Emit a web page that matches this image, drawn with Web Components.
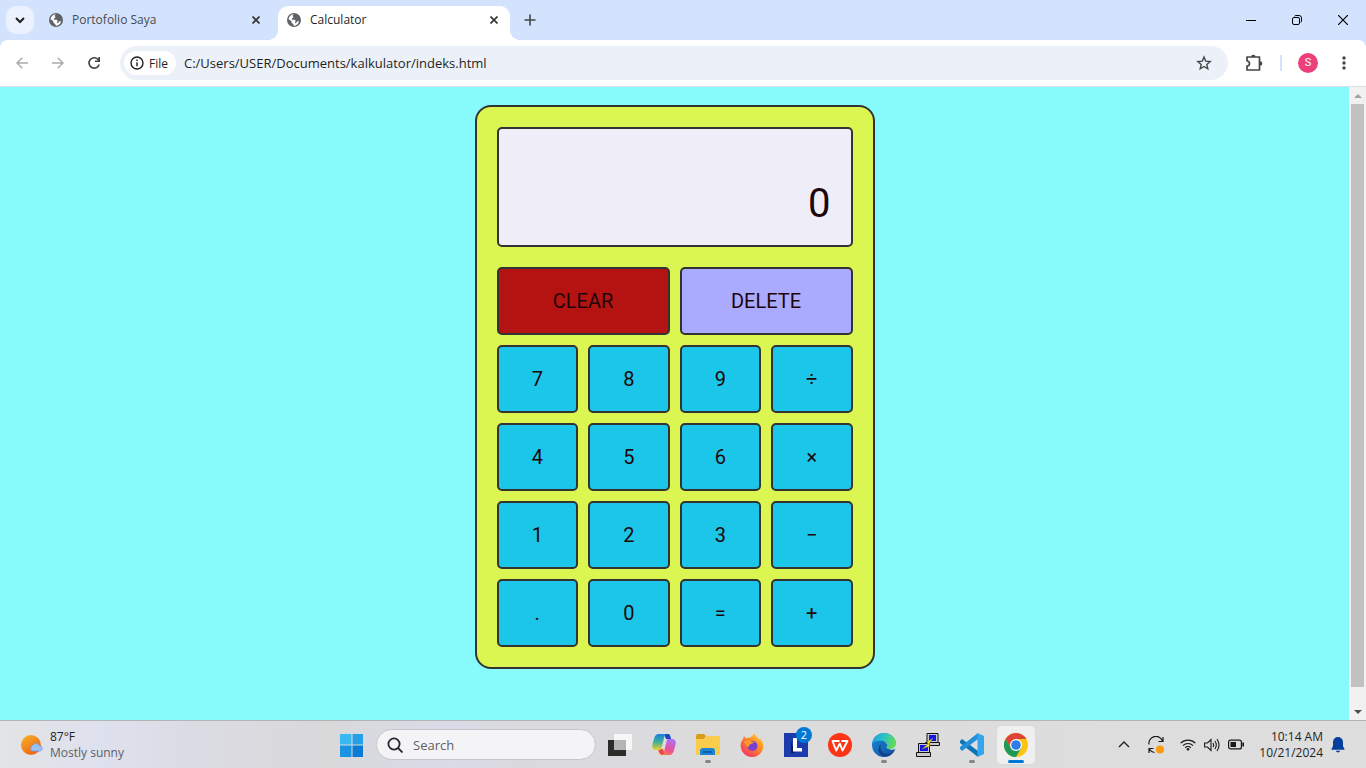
<!DOCTYPE html>
<html lang="en">
<head>
<meta charset="utf-8">
<title>Calculator</title>
<style>
  html, body { height: 100%; margin: 0; }
  body { font-family: "Open Sans", "Noto Sans", sans-serif; color: #1f1f1f; overflow: hidden; }
</style>
</head>
<body>
<desktop-shell>
  <tab-strip slot="top">
    <browser-tab>Portofolio Saya</browser-tab>
    <browser-tab active>Calculator</browser-tab>
  </tab-strip>
  <tool-bar slot="top"></tool-bar>
  <page-view slot="page"><calc-app></calc-app></page-view>
  <task-bar slot="bottom"></task-bar>
</desktop-shell>

<script>
const base = `
  :host, *, *::before, *::after { box-sizing: border-box; }
  button, input { font: inherit; color: inherit; border: 0; background: none; padding: 0; margin: 0; min-width: 0; outline: 0; }
  button { display: flex; align-items: center; justify-content: center; }
  svg { display: block; flex: none; }
`;
function define(name, css, html, setup) {
  const t = document.createElement('template');
  t.innerHTML = `<style>${base}${css}</style>${html}`;
  customElements.define(name, class extends HTMLElement {
    constructor() {
      super();
      this.attachShadow({ mode: 'open' }).append(t.content.cloneNode(true));
    }
    connectedCallback() { if (setup) setup(this, this.shadowRoot); }
  });
}

define('desktop-shell', `
  :host { display: flex; flex-direction: column; height: 100vh; }
  main { flex: 1; min-height: 0; display: flex; }
  ::slotted([slot=page]) { flex: 1; }
`, `<slot name="top"></slot><main><slot name="page"></slot></main><slot name="bottom"></slot>`);

define('tab-strip', `
  :host { display: flex; align-items: flex-end; height: 40px; background: #d3e2fd; padding-left: 6px; }
  .find { width: 28px; height: 28px; border-radius: 10px; background: #ebf2fe; margin: 0 4px 6px 0; }
  .add { width: 40px; height: 40px; }
  .win { margin-left: auto; display: flex; }
  .win button { width: 46px; height: 40px; }
`, `
  <button class="find" aria-label="Search tabs"><svg width="10" height="8" viewBox="0 0 10 8" fill="none" stroke="#1f1f1f" stroke-width="2"><path d="M1 2l4 4 4-4"/></svg></button>
  <slot></slot>
  <button class="add" aria-label="New tab"><svg width="12" height="12" viewBox="0 0 12 12" stroke="#444746" stroke-width="1.600"><path d="M6 .5v11M.5 6h11"/></svg></button>
  <div class="win">
    <button aria-label="Minimize"><svg width="10" height="10" viewBox="0 0 10 10" stroke="#000"><path d="M0 5.500h10"/></svg></button>
    <button aria-label="Restore"><svg width="10" height="10" viewBox="0 0 10 10" fill="none" stroke="#000"><rect x=".5" y="2.500" width="7" height="7" rx="1.500"/><path d="M2.500 1.200Q3 .5 4 .5h3a2.500 2.500 0 0 1 2.500 2.500v3q0 1-.8 1.500"/></svg></button>
    <button aria-label="Close"><svg width="10" height="10" viewBox="0 0 10 10" stroke="#000" stroke-width="1.200"><path d="M0 0l10 10M10 0L0 10"/></svg></button>
  </div>
`);

define('browser-tab', `
  :host { display: flex; align-items: center; width: 240px; height: 34px; padding: 0 14px 6px 10px; font-size: 12px; line-height: 16px; color: #474b50; position: relative; }
  :host([active]) { width: 232px; background: #fff; border-radius: 10px 10px 0 0; color: #1f1f1f; padding: 0 8px 6px 8px; }
  :host([active])::before, :host([active])::after { content: ""; position: absolute; bottom: 0; width: 10px; height: 10px; }
  :host([active])::before { right: 100%; background: radial-gradient(circle at 0 0, transparent 10px, #fff 10px); }
  :host([active])::after { left: 100%; background: radial-gradient(circle at 100% 0, transparent 10px, #fff 10px); }
  .t { flex: 1; padding-left: 8px; white-space: nowrap; }
  button { width: 16px; height: 16px; }
`, `
  <svg width="16" height="16" viewBox="0 0 16 16"><circle cx="8" cy="8" r="7" fill="#5f6368"/><path fill="#fff" d="M8.600 2.300c-1.300.1-1.900.6-1.900 1.500 0 .7.700.9.700 1.500 0 .9-1.600.6-1.600 1.600 0 .8.700.9 1.700.9 1.500 0 2 .5 2 1.400 0 .7-.5.9-.5 1.500 0 .5.500.7 1.100.3.700-.5.700-1.400 1.500-1.700.6-.2 1-.1 1.400.1a5.700 5.700 0 0 1-5.200 4.300c-.3-.5-.1-1.200-.6-1.800-.6-.6-1.800-.6-1.800-1.700 0-.7.200-1-.4-1.500L2.500 7.300a5.600 5.600 0 0 1 6.100-5z"/></svg>
  <span class="t"><slot></slot></span>
  <button aria-label="Close tab"><svg width="8" height="8" viewBox="0 0 8 8" stroke="#333" stroke-width="1.600"><path d="M.5.5l7 7M7.500.5l-7 7"/></svg></button>
`);

define('tool-bar', `
  :host { display: flex; align-items: center; height: 47px; background: linear-gradient(#d3e2fd, #d3e2fd); border-bottom: 1px solid #dcdfe3; }
  .row { flex: 1; display: flex; align-items: center; height: 46px; padding: 0 4px; background: #fff; border-radius: 8px 8px 0 0; }
  .nav { width: 36px; height: 36px; }
  .omni { flex: 1; display: flex; align-items: center; height: 34px; margin: 0 8px 0 8px; padding: 0 16px 0 4px; border-radius: 17px; background: #ecf1f9; }
  .chip { display: flex; align-items: center; gap: 4px; height: 24px; padding: 0 8px 0 5px; border-radius: 12px; background: #fff; font-size: 12px; font-weight: 500; }
  input { flex: 1; margin-left: 8px; font-size: 13px; height: 20px; }
  .sep { width: 2px; height: 16px; background: #d3e3fd; margin: 0 8px; }
  .me span { width: 20px; height: 20px; border-radius: 50%; background: #ec407a; color: #fff; font: 11px/20px Roboto, sans-serif; }
`, `
  <div class="row">
  <button class="nav" aria-label="Back"><svg width="12" height="12" viewBox="0 0 12 12" fill="none" stroke="#a9abad" stroke-width="1.500"><path d="M12 6H1M6.300.700L1 6l5.300 5.300"/></svg></button>
  <button class="nav" aria-label="Forward"><svg width="12" height="12" viewBox="0 0 12 12" fill="none" stroke="#a9abad" stroke-width="1.500"><path d="M0 6h11M5.700.700L11 6l-5.300 5.300"/></svg></button>
  <button class="nav" aria-label="Reload"><svg width="14" height="14" viewBox="0 0 14 14" fill="none" stroke="#3c4043" stroke-width="1.600"><path d="M12.200 8.500A5.200 5.200 0 1 1 11 3.300L12 4.600"/><path d="M12.200 1v4.200H8"/></svg></button>
  <div class="omni">
    <button class="chip"><svg width="16" height="16" viewBox="0 0 16 16" fill="none" stroke="#1f1f1f" stroke-width="1.400"><circle cx="8" cy="8" r="6"/><path d="M8 7.200v4M8 4.600V6"/></svg><span>File</span></button>
    <input aria-label="Address" value="C:/Users/USER/Documents/kalkulator/indeks.html">
    <button aria-label="Bookmark"><svg width="16" height="16" viewBox="0 0 16 16" fill="none" stroke="#444746" stroke-width="1.400"><path d="M8 2l1.700 4.100 4.500.4-3.400 2.900 1 4.400L8 11.500l-3.800 2.300 1-4.400L1.800 6.500l4.500-.4z"/></svg></button>
  </div>
  <button class="nav" aria-label="Extensions"><svg width="18" height="18" viewBox="0 0 18 18"><path fill="none" stroke="#444746" stroke-width="1.700" stroke-linejoin="round" d="M2 3h12.500v13H2v-3.800q2.500-.4 2.500-2.700T2 6.800z"/><path fill="#444746" d="M6 3a2.300 2.300 0 0 1 4.600 0zM15 7.200a2.300 2.300 0 0 1 0 4.600z"/></svg></button>
  <span class="sep"></span>
  <button class="nav me" aria-label="Profile"><span>S</span></button>
  <button class="nav" aria-label="Menu"><svg width="4" height="14" viewBox="0 0 4 14" fill="#444746"><circle cx="2" cy="2" r="1.700"/><circle cx="2" cy="7" r="1.700"/><circle cx="2" cy="12" r="1.700"/></svg></button>
  </div>
`);

define('page-view', `
  :host { display: flex; background: #87fafb; min-height: 0; }
  .content { flex: 1; padding-top: 18px; overflow: hidden; }
  .bar { width: 17px; display: flex; flex-direction: column; align-items: center; background: #f1f1f1; }
  .bar button { width: 17px; height: 17px; }
  .thumb { width: 13px; flex: 583; background: #c1c1c1; }
  .rest { flex: 16; }
`, `
  <div class="content"><slot></slot></div>
  <div class="bar">
    <button aria-label="Scroll up"><svg width="8" height="4" viewBox="0 0 8 4" fill="#a3a3a3"><path d="M4 0l4 4H0z"/></svg></button>
    <div class="thumb"></div><div class="rest"></div>
    <button aria-label="Scroll down"><svg width="8" height="4" viewBox="0 0 8 4" fill="#505050"><path d="M4 4l4-4H0z"/></svg></button>
  </div>
`);

define('calc-app', `
  :host { display: block; width: 400px; margin: 0 auto; padding: 20px; border: 2px solid #333; border-radius: 16px; background: #dcf651; font-family: Roboto, sans-serif; color: #1d0509; }
  output { display: flex; justify-content: flex-end; align-items: flex-end; height: 120px; padding: 0 20px 17px; border: 2px solid #333; border-radius: 5px; background: #efedf8; font-size: 40px; line-height: 48px; }
  .keys { display: grid; grid-template-columns: repeat(4, 1fr); gap: 10px; margin-top: 20px; }
  calc-key[wide] { grid-column: span 2; }
`, `
  <output>0</output>
  <div class="keys">
    <calc-key wide style="--fill:#b51212">CLEAR</calc-key>
    <calc-key wide style="--fill:#aaaaff">DELETE</calc-key>
    <calc-key>7</calc-key><calc-key>8</calc-key><calc-key>9</calc-key><calc-key>÷</calc-key>
    <calc-key>4</calc-key><calc-key>5</calc-key><calc-key>6</calc-key><calc-key>×</calc-key>
    <calc-key>1</calc-key><calc-key>2</calc-key><calc-key>3</calc-key><calc-key>−</calc-key>
    <calc-key>.</calc-key><calc-key>0</calc-key><calc-key>=</calc-key><calc-key>+</calc-key>
  </div>
`);

define('calc-key', `
  :host { display: block; }
  button { width: 100%; height: 68px; border: 2px solid #333; border-radius: 5px; background: var(--fill, #1cc6e8); font-size: 20px; line-height: 24px; }
`, `<button><slot></slot></button>`);

define('task-item', `
  :host { display: block; }
  button { position: relative; width: 44px; height: 47px; }
  .tile { display: flex; align-items: center; justify-content: center; width: 38px; height: 38px; border-radius: 4px; }
  :host([active]) .tile { background: #efeff0; box-shadow: 0 0 1px #bbb; }
  :host([running]) button::after, :host([active]) button::after { content: ""; position: absolute; bottom: 5px; left: 19px; width: 6px; height: 3px; border-radius: 2px; background: #85868a; }
  :host([active]) button::after { left: 14px; width: 16px; background: #0078d4; }
  .badge { position: absolute; top: 6px; right: 6px; width: 16px; height: 16px; border-radius: 50%; background: #0078d4; color: #fff; font-size: 11px; line-height: 16px; text-align: center; }
`, `<button><span class="tile"><slot></slot></span></button>`, (el, root) => {
  const button = root.querySelector('button');
  button.setAttribute('aria-label', el.getAttribute('name'));
  if (el.hasAttribute('count') && !root.querySelector('.badge')) {
    const badge = document.createElement('span');
    badge.className = 'badge';
    badge.textContent = el.getAttribute('count');
    button.append(badge);
  }
});

define('task-bar', `
  :host { display: grid; grid-template-columns: 1fr auto 1fr; height: 48px; border-top: 1px solid #b1b3b5; background: linear-gradient(90deg, #e3e4e5 0, #dee1ee 7%, #dbdbe4 14%, #d9d9da 24%, #d8dbe8 33%, #dadadd 38%, #dcdcdc 60%, #dedede 100%); padding-left: 2px; }
  .weather { justify-self: start; padding: 0 0 0 19px; gap: 7px; font-size: 12px; line-height: 16px; text-align: left; }
  .weather span, .clock span { display: block; }
  .muted { color: #5d5f66; }
  .mid { display: flex; align-items: center; }
  .search { display: flex; align-items: center; width: 220px; height: 31px; margin: 0 2px; padding: 0 10px; gap: 10px; border: 1px solid #c6c7cb; border-radius: 16px; background: #f4f4f7; color: #5f6065; font-size: 13px; }
  .search input { flex: 1; height: 20px; }
  .search input::placeholder { color: #5f6065; opacity: 1; }
  .tray { display: flex; align-items: center; justify-content: flex-end; padding-right: 20px; }
  .tray > button { height: 40px; width: 24px; }
  .tray .wide { width: 40px; }
  .tray .clock { display: block; width: auto; margin: 0 7px 0 11px; font-size: 12px; line-height: 16px; text-align: right; height: 32px; }
  .tray .bell { width: 16px; }
`, `
  <button class="weather">
    <svg width="22" height="22" viewBox="0 0 22 22"><defs><linearGradient id="sun" x1="0" y1="0" x2=".6" y2="1"><stop stop-color="#f5b52e"/><stop offset="1" stop-color="#f26511"/></linearGradient></defs><circle cx="10" cy="11" r="10" fill="url(#sun)"/><path d="M11 17a3 3 0 0 1 .3-5.200 4 4 0 0 1 7.200 0A2.700 2.700 0 0 1 19.500 17z" fill="#9cc0f8" stroke="#6f9ae8" stroke-width=".8"/></svg>
    <span><span>87°F</span><span class="muted">Mostly sunny</span></span>
  </button>
  <div class="mid">
    <task-item name="Start"><svg width="24" height="24" viewBox="0 0 24 24"><path fill="#3bb8f2" d="M0 1h11.500v10.500H0z"/><path fill="#23a0e8" d="M12.500 1H23v10.500H12.500z"/><path fill="#1a94e2" d="M0 12.500h11.500V24H0z"/><path fill="#0a7ad6" d="M12.500 12.500H23V24H12.500z"/></svg></task-item>
    <label class="search"><svg width="16" height="16" viewBox="0 0 16 16" fill="none" stroke="#26272b" stroke-width="1.800"><circle cx="7" cy="7" r="5.600"/><path d="M11 11l4.500 4.500"/></svg><input type="text" placeholder="Search" aria-label="Search"></label>
    <task-item name="Task view"><svg width="24" height="24" viewBox="0 0 24 24"><path fill="#2c2c2a" d="M0 7h18v16H0z"/><path fill="#f7f7f7" d="M6 1h18v16H6z"/><path fill="#b5b5b5" d="M6 7h12v10H6z"/></svg></task-item>
    <task-item name="Copilot"><svg width="24" height="24" viewBox="0 0 24 24"><defs><linearGradient id="c1" x1="0" y1="0" x2="0" y2="1"><stop stop-color="#1c7fe0"/><stop offset=".5" stop-color="#3fae9c"/><stop offset="1" stop-color="#f0cf28"/></linearGradient><linearGradient id="c2" x1="0" y1="1" x2=".4" y2="0"><stop stop-color="#f98a3c"/><stop offset=".45" stop-color="#ee4f91"/><stop offset="1" stop-color="#b46cf0"/></linearGradient></defs><path fill="#1b45c4" d="M12 1h4c2 0 2.500 2 3 5h-5z"/><path fill="#e94c3c" d="M6 16h5l2 6h-2c-3 0-4-2-5-6z"/><path fill="url(#c1)" d="M7 1h8c-2 0-2.500 2-3 4L9.500 15c-.5 1.500-1 2-2.500 2H4c-3 0-4.500-2-3.500-6L2 6c1-3.500 2-5 5-5z"/><path fill="url(#c2)" d="M17 22H9c2 0 2.500-1 3-3l2.500-10.500C15 6.500 15.500 6 17 6h3c3 0 4.500 2 3.500 6L22 17c-1 3.500-2 5-5 5z"/></svg></task-item>
    <task-item name="File Explorer" running><svg width="26" height="24" viewBox="0 0 26 24"><path fill="#d99c18" d="M1 3q0-2 2-2h6l2 2-2 3H1z"/><path fill="#fbcc4c" d="M1 6h8l3-3h11q2 0 2 2v16q0 1-1 1H2q-1 0-1-1z"/><path fill="#1b84d4" d="M5 22v-4q0-3 3-3h9q3 0 3 3v4z"/><path fill="#0c5fa8" d="M8 18h9v2H8z"/></svg></task-item>
    <task-item name="Firefox"><svg width="24" height="24" viewBox="0 0 24 24"><defs><linearGradient id="f" x1="1" y1="0" x2=".2" y2="1"><stop stop-color="#ffe03c"/><stop offset=".45" stop-color="#ff8b23"/><stop offset="1" stop-color="#f5316c"/></linearGradient></defs><path fill="url(#f)" d="M3 6l1-3 2 2.500q2-1.300 4.500-1C12 3 14 1 15 .5c.3 3 3.500 4 4 6l1-1c2.500 2.500 3.800 6 3.200 9.500A11.400 11.400 0 0 1 .7 14C.3 11 1.300 8 3 6z"/><circle cx="12.500" cy="13" r="5" fill="#7a3fd0"/><path fill="#ff9a2b" d="M4 9c3-2 5-2 7-.5l3 .5c-1 2-4 1.500-4.500 3S8 15 6 12z"/></svg></task-item>
    <task-item name="L" count="2"><svg width="24" height="24" viewBox="0 0 24 24"><path fill="#1c3cae" d="M0 0h24v24H0z"/><path fill="#0b2050" d="M7 8v12l4 0z"/><path fill="#fff" d="M9 5h4v10h5v3.500H9z"/></svg></task-item>
    <task-item name="WPS Office"><svg width="24" height="24" viewBox="0 0 24 24"><circle cx="12" cy="12" r="12" fill="#fb3516"/><path fill="none" stroke="#fff" stroke-width="1.900" stroke-linejoin="round" d="M11.500 8H4.500l3.700 9.500 3.600-7 2.700 7L19.500 8h-6"/></svg></task-item>
    <task-item name="Microsoft Edge" running><svg width="24" height="24" viewBox="0 0 24 24"><defs><linearGradient id="e1" x1="0" y1=".2" x2="1" y2=".4"><stop stop-color="#1b9de2"/><stop offset=".5" stop-color="#2ec2c5"/><stop offset="1" stop-color="#62dc55"/></linearGradient><linearGradient id="e2" x1="0" y1="0" x2="1" y2="1"><stop stop-color="#1a8bd8"/><stop offset="1" stop-color="#114a9c"/></linearGradient></defs><circle cx="12" cy="12" r="12" fill="url(#e2)"/><path fill="#dcdcdc" d="M13 10q4 .5 3 4c0 3 5 3.500 7.500 2L25 12 17 8z"/><path fill="url(#e1)" d="M0 11C1 4 6 0 12 0c7 0 12 5 12 10 0 4-3 6-6.500 6-2.500 0-3.500-1-3-2 1.500-2 .5-5-3.500-6C6 7 1 8 0 11z"/><path fill="#123f8b" d="M9 11c-2 5 1 10 7 10q3 0 6-3c-3 5-7 6-11 5.500C5 20 6 13 9 11z"/></svg></task-item>
    <task-item name="PuTTY"><svg width="24" height="24" viewBox="0 0 24 24" stroke="#111"><path fill="#c9c9c9" d="M11 .5h11v9H11zM9.500 9.500h14v3h-14z"/><path fill="#1414e8" stroke="none" d="M13 2h7v6h-7z"/><path fill="#c9c9c9" d="M2.500 10.500h11v9h-11zM.5 19.500h14v4H.5z"/><path fill="#1414e8" stroke="none" d="M4 12h8v6H4z"/><path fill="#ffee1c" stroke="#776" stroke-width=".6" d="M17 5l-6 4 1 2-6 5 8-3-1-2z"/></svg></task-item>
    <task-item name="Visual Studio Code" running><svg width="24" height="24" viewBox="0 0 24 24"><path fill="#0f73b8" d="M0 8l2-2 16 12v6L0 10z"/><path fill="#2090da" d="M0 16l2 2L18 6V0L0 14z"/><path fill="#34a6ee" d="M17.500 0L24 3v18l-6.500 3z"/></svg></task-item>
    <task-item name="Chrome" active><svg width="24" height="24" viewBox="0 0 24 24"><circle cx="12" cy="12" r="12" fill="#fdc511"/><path fill="#dc4437" d="M1.600 6A12 12 0 0 1 22.400 6H12l-5.200 9z"/><path fill="#1d9a57" d="M1.600 6A12 12 0 0 0 12 24l5.200-9H6.800z"/><circle cx="12" cy="12" r="6" fill="#fff"/><circle cx="12" cy="12" r="4.800" fill="#2f7de8"/></svg></task-item>
  </div>
  <div class="tray">
    <button aria-label="Show hidden icons"><svg width="12" height="7" viewBox="0 0 12 7" fill="none" stroke="#222" stroke-width="1.400"><path d="M1 6l5-5 5 5"/></svg></button>
    <button class="wide" aria-label="Updates"><svg width="18" height="18" viewBox="0 0 18 18" fill="none" stroke="#1a1a1a" stroke-width="1.200"><path d="M2 8.500A7 7 0 0 1 15.500 5M16 1v4.500h-4.500M7.500 16.500Q4 16 2.300 13M2 17v-4.500h4.500"/><circle cx="13" cy="13.500" r="4" fill="#fb9a0c" stroke="none"/></svg></button>
    <button aria-label="Wi-Fi"><svg width="16" height="13" viewBox="0 0 16 13" fill="none" stroke="#1a1a1a" stroke-width="1.200"><path d="M.7 5.200a10.300 10.300 0 0 1 14.600 0M3 7.600a7 7 0 0 1 10 0M5.200 9.800a4 4 0 0 1 5.600 0"/><circle cx="8" cy="11.200" r="1.300" fill="#1a1a1a" stroke="none"/></svg></button>
    <button aria-label="Volume"><svg width="16" height="14" viewBox="0 0 16 14" fill="none" stroke="#1a1a1a" stroke-width="1.100"><path d="M.6 5h2.900L7 1.500v11L3.500 9H.6zM9 5q1.200 2 0 4M11 3q2.600 4 0 8M13 1q4 6 0 12"/></svg></button>
    <button aria-label="Battery"><svg width="16" height="11" viewBox="0 0 16 11"><rect x=".6" y="1.100" width="12.800" height="8.800" rx="2" fill="none" stroke="#1a1a1a" stroke-width="1.200"/><path fill="#1a1a1a" d="M2.500 3H8v5H2.500zM14.300 3.500H16v4h-1.700z"/></svg></button>
    <button class="clock"><span>10:14 AM</span><span>10/21/2024</span></button>
    <button class="bell" aria-label="Notifications"><svg width="14" height="16" viewBox="0 0 14 16" fill="#05409c"><path d="M7 0a5 5 0 0 1 5 5v4l1.500 3v.8H.5V12L2 9V5a5 5 0 0 1 5-5zM4.800 13.800h4.400Q8.600 15.500 7 15.500t-2.200-1.700z"/></svg></button>
  </div>
`);
</script>
</body>
</html>
